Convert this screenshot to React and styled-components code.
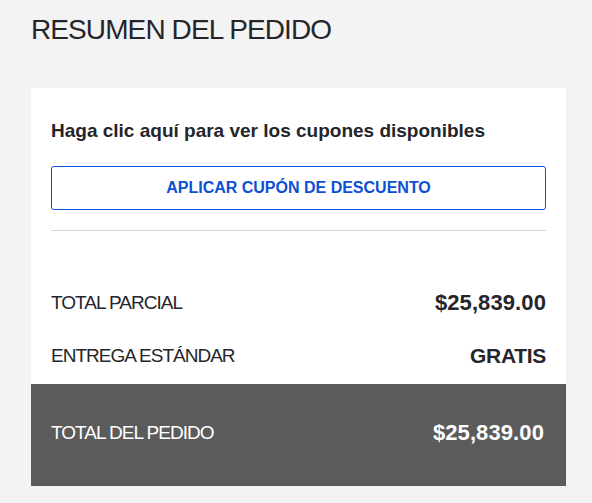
import React from 'react';
import styled, {createGlobalStyle} from 'styled-components';

const GlobalStyle = createGlobalStyle`
  html, body {
    margin: 0;
    padding: 0;
    background: #f3f3f3;
  }

  body {
    font-family: "Liberation Sans", Arial, sans-serif;
    color: #25252b;
  }
`;

const Page = styled.div`
  padding: 13px 26px 17px 31px;
`;

const Title = styled.h1`
  margin: 0 0 41px;
  font-size: 28px;
  line-height: 34px;
  font-weight: 400;
  letter-spacing: -0.9px;
  text-transform: uppercase;
`;

const Card = styled.section`
  background: #fff;
`;

const CouponBlock = styled.div`
  padding: 32px 20px 0;
`;

const CouponHint = styled.div`
  font-size: 19px;
  line-height: 22px;
  font-weight: 700;
  cursor: pointer;
`;

const CouponButton = styled.button`
  display: block;
  width: 100%;
  height: 44px;
  margin-top: 24px;
  border: 1px solid #0b50d6;
  border-radius: 3px;
  background: #fff;
  color: #0b50d6;
  font-family: inherit;
  font-size: 16px;
  font-weight: 700;
  text-transform: uppercase;
  cursor: pointer;
`;

const Divider = styled.hr`
  margin: 20px 0 0;
  border: 0;
  border-top: 1px solid #d6d6d6;
`;

const Lines = styled.div`
  padding: 45px 20px 2px;
`;

const Line = styled.div`
  display: flex;
  align-items: center;
  justify-content: space-between;
  height: 53px;
`;

const Label = styled.span`
  font-size: 19px;
  letter-spacing: -1px;
  text-transform: uppercase;
`;

const Amount = styled.span`
  font-weight: 700;
  font-size: ${p => (p.$money ? '22px' : '21px')};
  letter-spacing: ${p => (p.$money ? '0.1px' : '-0.3px')};
`;

const TotalBar = styled.div`
  display: flex;
  align-items: center;
  justify-content: space-between;
  height: 102px;
  padding: 0 22px 5px 20px;
  box-sizing: border-box;
  background: #5b5b5b;
  color: #fff;
`;

const summary = [
  {label: 'Total parcial', value: '$25,839.00', money: true},
  {label: 'Entrega estándar', value: 'GRATIS', money: false},
];

export default function App() {
  return (
    <>
      <GlobalStyle/>
      <Page>
        <Title>Resumen del pedido</Title>
        <Card>
          <CouponBlock>
            <CouponHint>Haga clic aquí para ver los cupones disponibles</CouponHint>
            <CouponButton type="button">Aplicar cupón de descuento</CouponButton>
            <Divider/>
          </CouponBlock>
          <Lines>
            {summary.map(row => (
              <Line key={row.label}>
                <Label>{row.label}</Label>
                <Amount $money={row.money}>{row.value}</Amount>
              </Line>
            ))}
          </Lines>
          <TotalBar>
            <Label>Total del pedido</Label>
            <Amount $money>$25,839.00</Amount>
          </TotalBar>
        </Card>
      </Page>
    </>
  );
}
